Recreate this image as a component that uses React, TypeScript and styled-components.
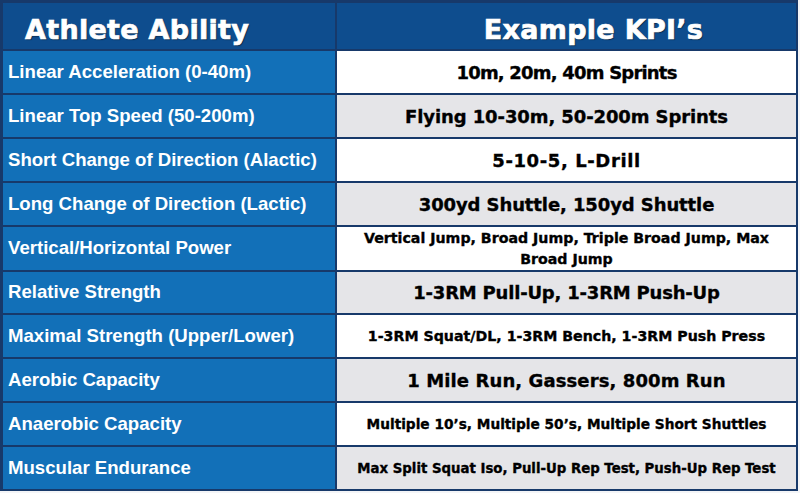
import { Fragment } from 'react'
import styled, { createGlobalStyle } from 'styled-components'

const GlobalStyle = createGlobalStyle`
  html, body {
    margin: 0;
    padding: 0;
    background: #f4f5f7;
  }
`

const Table = styled.div`
  width: 798px;
  height: 491px;
  box-sizing: border-box;
  display: grid;
  grid-template-columns: 332px 1fr;
  grid-template-rows: 46px repeat(10, 1fr);
  gap: 2px;
  padding: 3px 2px 2px 3px;
  background: #17396a;
`

const HeaderCell = styled.div<{ $centered: boolean }>`
  background: #0e4d8e;
  color: #fff;
  display: flex;
  align-items: center;
  justify-content: ${(p) => (p.$centered ? 'center' : 'flex-start')};
  padding-left: ${(p) => (p.$centered ? 54 : 22)}px;
  padding-top: 7px;
  font-family: 'DejaVu Sans', sans-serif;
  font-weight: 700;
  font-size: 27px;
  letter-spacing: 0.3px;
  -webkit-text-stroke: 0.7px #fff;
  text-shadow: 1px 1px 1px rgba(0, 0, 0, 0.5);
`

const AbilityCell = styled.div`
  background: #1270b8;
  color: #fff;
  display: flex;
  align-items: center;
  padding-left: 5px;
  font-family: 'Liberation Sans', Arial, sans-serif;
  font-weight: 700;
  font-size: 18.6px;
`

const KpiCell = styled.div<{ $shade: boolean; $size: number; $tracking: number }>`
  background: ${(p) => (p.$shade ? '#e5e5e8' : '#ffffff')};
  color: #000;
  display: flex;
  align-items: center;
  justify-content: center;
  text-align: center;
  padding: 1px 18px 0;
  font-family: 'DejaVu Sans', sans-serif;
  font-weight: 700;
  font-size: ${(p) => p.$size}px;
  letter-spacing: ${(p) => p.$tracking}px;
  line-height: 21px;
  -webkit-text-stroke: 0.35px #000;
`

const rows = [
  { ability: 'Linear Acceleration (0-40m)', kpi: '10m, 20m, 40m Sprints', size: 18, tracking: -0.8 },
  { ability: 'Linear Top Speed (50-200m)', kpi: 'Flying 10-30m, 50-200m Sprints', size: 18, tracking: -0.1 },
  { ability: 'Short Change of Direction (Alactic)', kpi: '5-10-5, L-Drill', size: 18, tracking: 0.6 },
  { ability: 'Long Change of Direction (Lactic)', kpi: '300yd Shuttle, 150yd Shuttle', size: 18, tracking: -0.1 },
  { ability: 'Vertical/Horizontal Power', kpi: 'Vertical Jump, Broad Jump, Triple Broad Jump, Max Broad Jump', size: 14.2, tracking: 0 },
  { ability: 'Relative Strength', kpi: '1-3RM Pull-Up, 1-3RM Push-Up', size: 18, tracking: -0.2 },
  { ability: 'Maximal Strength (Upper/Lower)', kpi: '1-3RM Squat/DL, 1-3RM Bench, 1-3RM Push Press', size: 14.2, tracking: 0 },
  { ability: 'Aerobic Capacity', kpi: '1 Mile Run, Gassers, 800m Run', size: 18, tracking: 0.1 },
  { ability: 'Anaerobic Capacity', kpi: 'Multiple 10’s, Multiple 50’s, Multiple Short Shuttles', size: 13.7, tracking: 0 },
  { ability: 'Muscular Endurance', kpi: 'Max Split Squat Iso, Pull-Up Rep Test, Push-Up Rep Test', size: 13.3, tracking: 0 },
]

export default function App() {
  return (
    <>
      <GlobalStyle />
      <Table>
        <HeaderCell $centered={false}>Athlete Ability</HeaderCell>
        <HeaderCell $centered>Example KPI’s</HeaderCell>
        {rows.map((row, i) => (
          <Fragment key={row.ability}>
            <AbilityCell>{row.ability}</AbilityCell>
            <KpiCell $shade={i % 2 === 1} $size={row.size} $tracking={row.tracking}>
              {row.kpi}
            </KpiCell>
          </Fragment>
        ))}
      </Table>
    </>
  )
}
